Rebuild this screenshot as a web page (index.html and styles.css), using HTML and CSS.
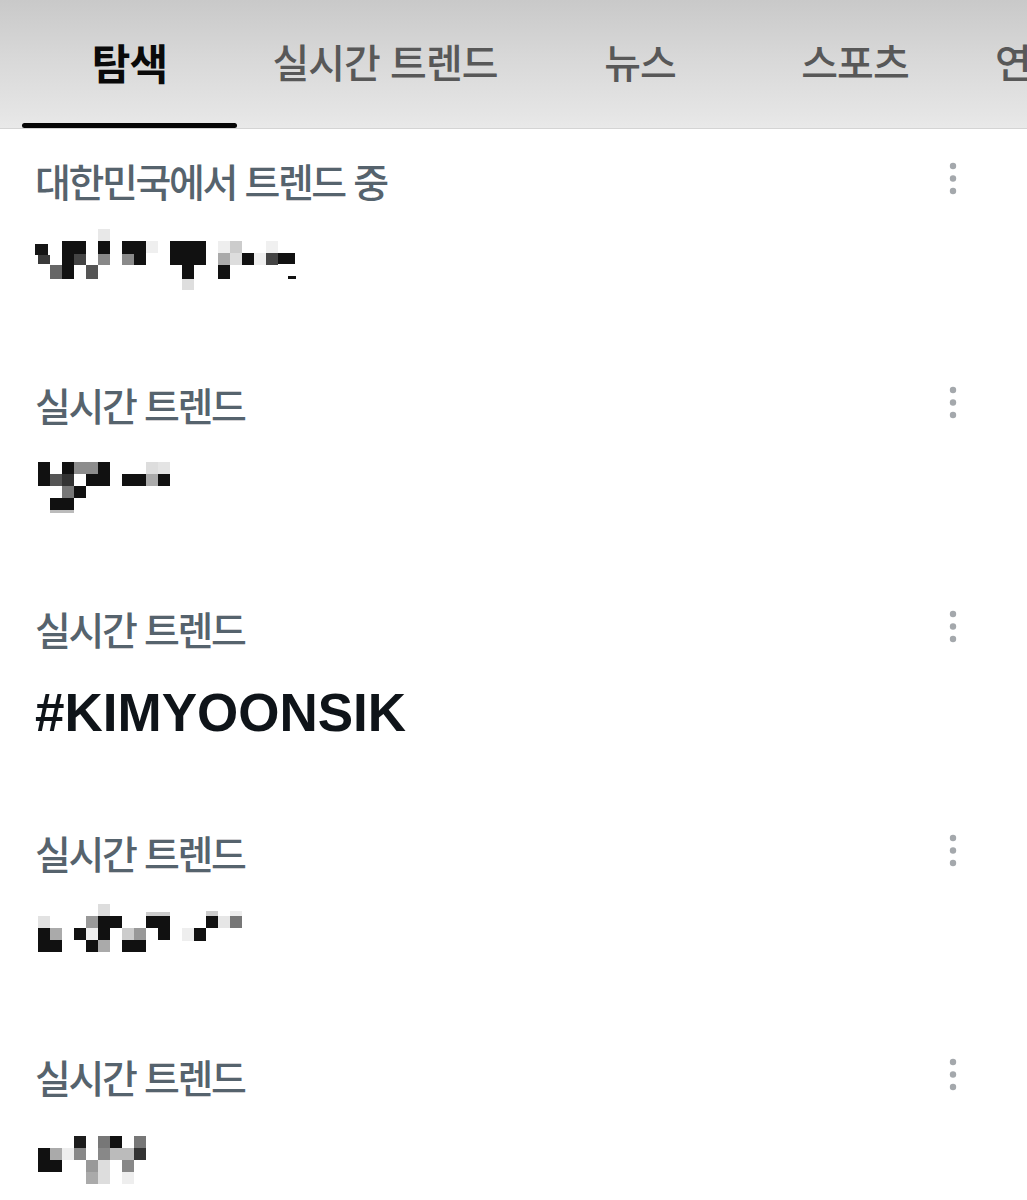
FILE: index.html
```html
<!DOCTYPE html>
<html lang="ko">
<head>
<meta charset="utf-8">
<title>탐색</title>
<link rel="stylesheet" href="styles.css">
</head>
<body>
<header class="tabs">
  <div class="tab tab-1 active"><span class="tab-text">탐색</span><i class="indicator"></i></div>
  <div class="tab tab-2"><span class="tab-text">실시간 트렌드</span></div>
  <div class="tab tab-3"><span class="tab-text">뉴스</span></div>
  <div class="tab tab-4"><span class="tab-text">스포츠</span></div>
  <div class="tab tab-5"><span class="tab-text">연예</span></div>
</header>
<main class="list">
  <section class="trend">
    <div class="head">
      <span class="label">대한민국에서 트렌드 중</span>
      <svg class="more" viewBox="0 0 8 44" width="8" height="44"><circle cx="4" cy="10" r="3.2"/><circle cx="4" cy="22.5" r="3.2"/><circle cx="4" cy="35" r="3.2"/></svg>
    </div>
    <div class="body">
      <svg class="mosaic m1" viewBox="-0.275 -1 22 6" width="264" height="72">
        <rect x="-0.3" y="0.25" width="1.1" height="0.95" fill="#151515"/>
        <rect x="0" y="1.2" width="1" height="0.75" fill="#3a3a3a"/>
        <rect x="1" y="2" width="1" height="1.2" fill="#666"/>
        <rect x="2" y="0" width="1" height="3.2" fill="#111"/>
        <rect x="3" y="0" width="1" height="1.1" fill="#111"/>
        <rect x="3" y="1.1" width="1" height="0.9" fill="#444"/>
        <rect x="4" y="2" width="1" height="1.2" fill="#555"/>
        <rect x="5" y="-1" width="1" height="1" fill="#e8e8e8"/>
        <rect x="5" y="0" width="1" height="1.1" fill="#111"/>
        <rect x="5" y="1.1" width="1" height="0.9" fill="#888"/>
        <rect x="7" y="0" width="1" height="1.1" fill="#111"/>
        <rect x="7" y="1.1" width="1" height="0.9" fill="#8a8a8a"/>
        <rect x="8" y="0" width="1" height="2" fill="#111"/>
        <rect x="9" y="0" width="1" height="1" fill="#efefef"/>
        <rect x="11" y="0" width="1" height="2" fill="#111"/>
        <rect x="12" y="0" width="1" height="3.2" fill="#111"/>
        <rect x="12" y="3.2" width="1" height="0.9" fill="#dedede"/>
        <rect x="13" y="0" width="1" height="2" fill="#111"/>
        <rect x="15" y="0" width="1" height="1" fill="#eee"/>
        <rect x="15" y="1" width="1" height="1" fill="#aaa"/>
        <rect x="15" y="2" width="1" height="1.2" fill="#111"/>
        <rect x="16" y="0" width="1" height="1" fill="#ccc"/>
        <rect x="16" y="1" width="1" height="1" fill="#ddd"/>
        <rect x="17" y="1" width="1" height="1" fill="#111"/>
        <rect x="18" y="1" width="1" height="1" fill="#efefef"/>
        <rect x="19" y="0" width="1" height="1" fill="#f0f0f0"/>
        <rect x="19" y="1" width="1" height="1" fill="#444"/>
        <rect x="20" y="1" width="1.35" height="0.9" fill="#111"/>
        <rect x="20.8" y="2.9" width="0.7" height="0.3" fill="#111"/>
      </svg>
    </div>
  </section>

  <section class="trend">
    <div class="head">
      <span class="label">실시간 트렌드</span>
      <svg class="more" viewBox="0 0 8 44" width="8" height="44"><circle cx="4" cy="10" r="3.2"/><circle cx="4" cy="22.5" r="3.2"/><circle cx="4" cy="35" r="3.2"/></svg>
    </div>
    <div class="body">
      <svg class="mosaic m2" viewBox="-0.275 -1 11.5 6" width="138" height="72">
        <rect x="0" y="0" width="1" height="2" fill="#111"/>
        <rect x="2" y="0" width="1" height="1" fill="#111"/>
        <rect x="3" y="0" width="2" height="1" fill="#8c8c8c"/>
        <rect x="5" y="0" width="1" height="2" fill="#111"/>
        <rect x="9" y="0" width="1" height="1" fill="#ddd"/>
        <rect x="10" y="0" width="1" height="1" fill="#e4e4e4"/>
        <rect x="1" y="1" width="1" height="1" fill="#555"/>
        <rect x="2" y="1" width="1" height="1" fill="#333"/>
        <rect x="4" y="1" width="1" height="1" fill="#111"/>
        <rect x="7" y="1" width="2" height="1" fill="#111"/>
        <rect x="9" y="1" width="1" height="1" fill="#aaa"/>
        <rect x="10" y="1" width="1" height="1" fill="#111"/>
        <rect x="2" y="2" width="1" height="1" fill="#777"/>
        <rect x="3" y="2" width="1" height="1" fill="#111"/>
        <rect x="1" y="3" width="2" height="1" fill="#111"/>
        <rect x="1" y="4" width="2" height="0.25" fill="#bbb"/>
      </svg>
    </div>
  </section>

  <section class="trend">
    <div class="head">
      <span class="label">실시간 트렌드</span>
      <svg class="more" viewBox="0 0 8 44" width="8" height="44"><circle cx="4" cy="10" r="3.2"/><circle cx="4" cy="22.5" r="3.2"/><circle cx="4" cy="35" r="3.2"/></svg>
    </div>
    <div class="body">
      <span class="topic">#KIMYOONSIK</span>
    </div>
  </section>

  <section class="trend">
    <div class="head">
      <span class="label">실시간 트렌드</span>
      <svg class="more" viewBox="0 0 8 44" width="8" height="44"><circle cx="4" cy="10" r="3.2"/><circle cx="4" cy="22.5" r="3.2"/><circle cx="4" cy="35" r="3.2"/></svg>
    </div>
    <div class="body">
      <svg class="mosaic m4" viewBox="-0.275 -1 17.5 6" width="210" height="72">
        <rect x="5" y="-1" width="1" height="1" fill="#ddd"/>
        <rect x="9" y="-0.35" width="2" height="0.35" fill="#ccc"/>
        <rect x="14" y="-0.4" width="1" height="0.4" fill="#ccc"/>
        <rect x="16" y="-0.4" width="1" height="0.4" fill="#eee"/>
        <rect x="0" y="0" width="1" height="1" fill="#e2e2e2"/>
        <rect x="4" y="0" width="1" height="1" fill="#999"/>
        <rect x="5" y="0" width="2" height="1" fill="#111"/>
        <rect x="9" y="0" width="2" height="1" fill="#111"/>
        <rect x="14" y="0" width="1" height="1" fill="#111"/>
        <rect x="15" y="0" width="1" height="1" fill="#e6e6e6"/>
        <rect x="16" y="0" width="1" height="1" fill="#777"/>
        <rect x="0" y="1" width="1" height="2" fill="#111"/>
        <rect x="1" y="1" width="1" height="1" fill="#aaa"/>
        <rect x="1" y="2" width="1" height="1" fill="#111"/>
        <rect x="3" y="1" width="1" height="1" fill="#111"/>
        <rect x="4" y="1" width="1" height="1" fill="#eee"/>
        <rect x="5" y="1" width="1" height="1" fill="#111"/>
        <rect x="7" y="1" width="1" height="1" fill="#ccc"/>
        <rect x="8" y="1" width="1" height="1" fill="#999"/>
        <rect x="10" y="1" width="1" height="1" fill="#111"/>
        <rect x="12" y="1" width="1" height="1.1" fill="#eee"/>
        <rect x="13" y="1" width="1" height="1.1" fill="#111"/>
        <rect x="4" y="2" width="1" height="1" fill="#111"/>
        <rect x="5" y="2" width="1" height="1" fill="#aaa"/>
        <rect x="7" y="2" width="2" height="1" fill="#111"/>
      </svg>
    </div>
  </section>

  <section class="trend">
    <div class="head">
      <span class="label">실시간 트렌드</span>
      <svg class="more" viewBox="0 0 8 44" width="8" height="44"><circle cx="4" cy="10" r="3.2"/><circle cx="4" cy="22.5" r="3.2"/><circle cx="4" cy="35" r="3.2"/></svg>
    </div>
    <div class="body">
      <svg class="mosaic m5" viewBox="-0.275 -1 9.5 6" width="114" height="72">
        <rect x="3" y="0" width="1" height="1" fill="#1c1c1c"/>
        <rect x="5" y="0" width="1" height="1" fill="#777"/>
        <rect x="6" y="0" width="1" height="1" fill="#111"/>
        <rect x="8" y="0" width="1" height="1" fill="#777"/>
        <rect x="0" y="1" width="1" height="2" fill="#111"/>
        <rect x="1" y="1" width="1" height="1" fill="#aaa"/>
        <rect x="1" y="2" width="1" height="1" fill="#111"/>
        <rect x="2" y="1" width="1" height="1" fill="#eee"/>
        <rect x="3" y="1" width="1" height="1" fill="#888"/>
        <rect x="5" y="1" width="1" height="1" fill="#888"/>
        <rect x="6" y="1" width="2" height="1" fill="#bbb"/>
        <rect x="8" y="1" width="1" height="1" fill="#333"/>
        <rect x="4" y="2" width="1" height="1" fill="#999"/>
        <rect x="5" y="2" width="1" height="2" fill="#ddd"/>
        <rect x="7" y="2" width="1" height="1" fill="#888"/>
        <rect x="4" y="3" width="1" height="1" fill="#aaa"/>
        <rect x="7" y="3" width="1" height="1" fill="#eee"/>
      </svg>
    </div>
  </section>
</main>
</body>
</html>
```

FILE: styles.css
```css
* { box-sizing: border-box; }

html, body {
  margin: 0;
  padding: 0;
  background: #ffffff;
}

body {
  width: 1027px;
  overflow: hidden;
  font-family: "Noto Sans CJK KR", "Noto Sans", sans-serif;
  color: #0f1419;
}

.tabs {
  display: flex;
  height: 129px;
  padding-left: 22px;
  background: linear-gradient(to bottom, #c9c9c9 0%, #d8d8d8 45%, #e5e5e5 90%, #e9e9e9 100%);
  border-bottom: 1px solid #d4d4d4;
  overflow: hidden;
  white-space: nowrap;
}

.tab {
  position: relative;
  display: flex;
  align-items: center;
  justify-content: center;
  flex: 0 0 auto;
  padding-bottom: 6px;
}

.tab-1 { width: 215px; }
.tab-2 { width: 296px; }
.tab-3 { width: 214px; }
.tab-4 { width: 216px; }
.tab-5 { width: 200px; justify-content: flex-start; padding-left: 32px; }

.tab-text {
  font-size: 40px;
  font-weight: 500;
  color: #585858;
  letter-spacing: -1px;
}

.active .tab-text {
  font-weight: 700;
  color: #0a0a0a;
  font-size: 42px;
}

.indicator {
  position: absolute;
  left: 0;
  right: 0;
  bottom: 0;
  height: 5px;
  border-radius: 3px;
  background: #050505;
}

.list {
  display: flex;
  flex-direction: column;
}

.trend {
  height: 224px;
  padding: 27px 70px 0 35px;
}

.head {
  display: flex;
  justify-content: space-between;
  align-items: flex-start;
  height: 48px;
}

.label {
  font-size: 39px;
  line-height: 48px;
  font-weight: 500;
  color: #56636d;
  letter-spacing: -2.4px;
}

.more {
  display: block;
  fill: #a4a8ac;
}

.body {
  margin-top: 29px;
  height: 64px;
}

.topic {
  display: block;
  font-family: "Liberation Sans", Arial, sans-serif;
  font-weight: 700;
  font-size: 53px;
  line-height: 64px;
  color: #0f1419;
}

.mosaic {
  display: block;
  shape-rendering: crispEdges;
}

.m1 { margin-top: -4px; }
.m2 { margin-top: -7px; }
.m4 { margin-top: -1px; }
.m5 { margin-top: -5px; }
```
